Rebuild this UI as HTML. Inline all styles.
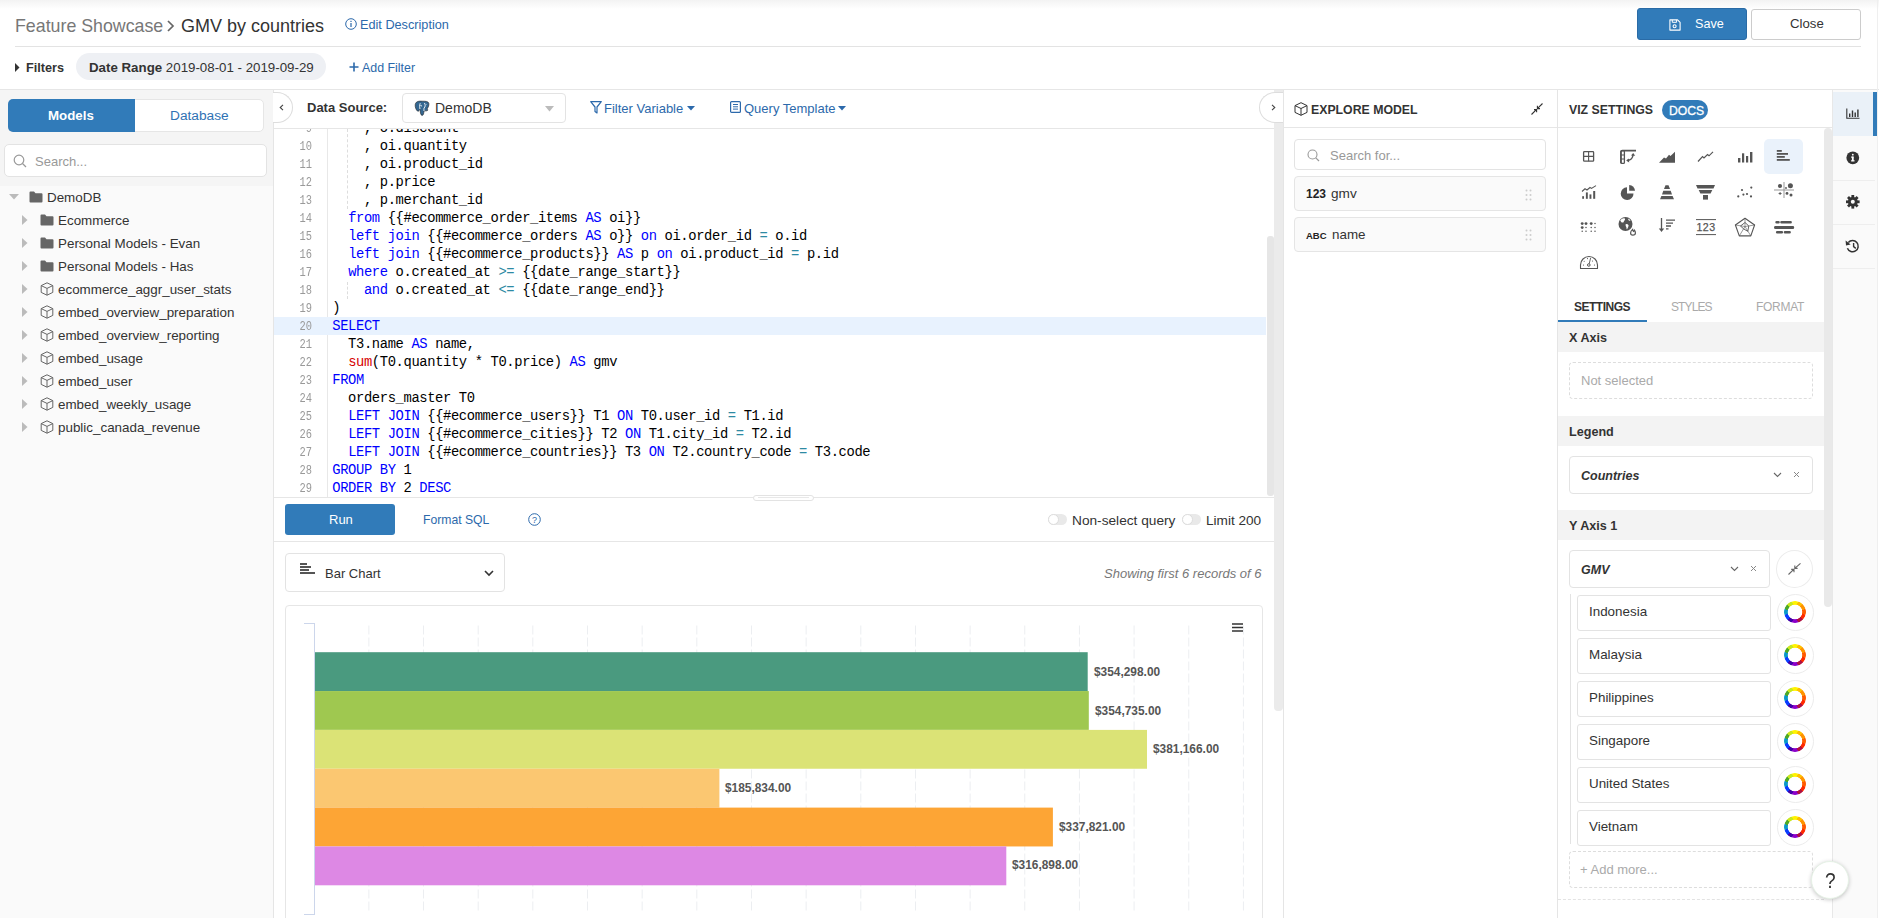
<!DOCTYPE html>
<html><head><meta charset="utf-8">
<style>
*{box-sizing:border-box;margin:0;padding:0}
html,body{width:1879px;height:918px;overflow:hidden;background:#fff;font-family:"Liberation Sans",sans-serif;font-size:13px;color:#333}
.a{position:absolute}
.t{position:absolute;white-space:nowrap;line-height:16px;margin-top:1px}
.b{font-weight:bold}
.mono{font-family:"Liberation Mono",monospace}
svg{position:absolute;overflow:visible}
/* code */
.code{position:absolute;left:333px;top:119px;font-family:"Liberation Mono",monospace;font-size:13.8px;letter-spacing:-0.37px;line-height:18px;color:#000;white-space:pre}
.k{color:#0000ff}.f{color:#d60000}.o{color:#2e8aa3}
.ln{position:absolute;left:280px;width:32px;top:119px;text-align:right;font-family:"Liberation Mono",monospace;font-size:13px;line-height:18px;color:#999;transform:scaleX(0.8);transform-origin:100% 0}
.tree .t{color:#333}
.field{position:absolute;left:1577px;width:194px;height:36px;border:1px solid #e3e3e3;border-radius:3px;background:#fff}
.field span{position:absolute;left:11px;top:9px;font-size:13px;color:#333}
.cw{position:absolute;left:1777px;width:37px;height:37px;border:1px solid #ececec;border-radius:50%;background:#fff}
</style></head><body>

<!-- ===== HEADER ===== -->
<div class="a" style="left:0;top:0;width:1879px;height:9px;background:linear-gradient(#f3f3f3,#fff)"></div>
<div class="t" style="left:15px;top:14.5px;font-size:17.8px;line-height:20px;color:#777">Feature Showcase</div>
<svg style="left:166px;top:20px" width="10" height="12" viewBox="0 0 10 12"><path d="M2 1 L7 6 L2 11" fill="none" stroke="#666" stroke-width="1.7"/></svg>
<div class="t" style="left:181px;top:14.5px;font-size:18px;line-height:20px;color:#333">GMV by countries</div>
<svg style="left:345px;top:18px" width="12" height="12" viewBox="0 0 12 12"><circle cx="6" cy="6" r="5.3" fill="none" stroke="#2c69ab" stroke-width="1"/><rect x="5.4" y="5" width="1.2" height="4" fill="#2c69ab"/><rect x="5.4" y="2.8" width="1.2" height="1.2" fill="#2c69ab"/></svg>
<div class="t" style="left:360px;top:16px;font-size:12.7px;color:#2c69ab">Edit Description</div>

<div class="a" style="left:1637px;top:8px;width:110px;height:32px;background:#317bb9;border:1px solid #2a6ba6;border-radius:3px"></div>
<svg style="left:1669px;top:19px" width="12" height="12" viewBox="0 0 12 12"><path d="M0.9 0.9 H8.6 L11.1 3.4 V11.1 H0.9 Z" fill="none" stroke="#fff" stroke-width="1.1" stroke-linejoin="round"/><path d="M3.3 0.9 V3.3 H7.6 V0.9" fill="none" stroke="#fff" stroke-width="1"/><circle cx="5.6" cy="7.2" r="1.5" fill="none" stroke="#fff" stroke-width="1.1"/></svg>
<div class="t" style="left:1695px;top:15px;color:#fff;font-size:12.6px">Save</div>
<div class="a" style="left:1751px;top:9px;width:110px;height:31px;border:1px solid #ccc;border-radius:3px;background:#fff"></div>
<div class="t" style="left:1790px;top:15px;color:#333;font-size:13.2px">Close</div>

<div class="a" style="left:15px;top:46px;width:1846px;height:1px;background:#e3e3e3"></div>


<!-- filters row -->
<svg style="left:15px;top:63px" width="5" height="9" viewBox="0 0 5 9"><path d="M0 0 L4.5 4.5 L0 9 Z" fill="#333"/></svg>
<div class="t b" style="left:26px;top:59px;font-size:12.7px;color:#333">Filters</div>
<div class="a" style="left:76px;top:53px;width:250px;height:27px;background:#eef0f4;border-radius:14px"></div>
<div class="t" style="left:89px;top:59px;font-size:13.3px;color:#333"><b>Date Range</b> 2019-08-01 - 2019-09-29</div>
<svg style="left:349px;top:62px" width="10" height="10" viewBox="0 0 10 10"><path d="M5 0.5 V9.5 M0.5 5 H9.5" stroke="#2c69ab" stroke-width="1.6"/></svg>
<div class="t" style="left:362px;top:59px;font-size:12.4px;color:#2c69ab">Add Filter</div>

<div class="a" style="left:0;top:89px;width:1879px;height:1px;background:#e6e6e6"></div>

<!-- ===== LEFT PANEL ===== -->
<div class="a" style="left:0;top:90px;width:273px;height:828px;background:#fafafa"></div>
<div class="a" style="left:0;top:90px;width:273px;height:96px;background:#f5f5f5"></div>
<div class="a" style="left:8px;top:99px;width:256px;height:33px;border:1px solid #e6e6e6;border-radius:5px;background:#fff"></div>
<div class="a" style="left:8px;top:99px;width:127px;height:33px;background:#317bb9;border-radius:5px 0 0 5px"></div>
<div class="t b" style="left:48px;top:107px;color:#fff;font-size:13.3px">Models</div>
<div class="t" style="left:170px;top:107px;color:#2f72b4;font-size:13.7px">Database</div>
<div class="a" style="left:4px;top:144px;width:263px;height:33px;border:1px solid #e3e3e3;border-radius:5px;background:#fff"></div>
<svg style="left:13px;top:154px" width="14" height="14" viewBox="0 0 14 14"><circle cx="6" cy="6" r="4.8" fill="none" stroke="#999" stroke-width="1.2"/><path d="M9.5 9.5 L13 13" stroke="#999" stroke-width="1.3"/></svg>
<div class="t" style="left:35px;top:153px;color:#999;font-size:13px">Search...</div>

<div class="tree">
<svg style="left:9px;top:194px" width="10" height="6" viewBox="0 0 10 6"><path d="M0 0 H10 L5 5.5 Z" fill="#bbb"/></svg>
<svg style="left:29px;top:191px" width="14" height="12" viewBox="0 0 14 12"><path d="M0.5 1.5 Q0.5 0.5 1.5 0.5 H5 L6.5 2.2 H12.5 Q13.5 2.2 13.5 3.2 V10.5 Q13.5 11.5 12.5 11.5 H1.5 Q0.5 11.5 0.5 10.5 Z" fill="#666"/></svg>
<div class="t" style="left:47px;top:189px;font-size:13.4px">DemoDB</div>
</div>
<svg style="left:22px;top:215px" width="6" height="10" viewBox="0 0 6 10"><path d="M0 0 L5.5 5 L0 10 Z" fill="#bbb"/></svg>
<svg style="left:40px;top:214px" width="14" height="12" viewBox="0 0 14 12"><path d="M0.5 1.5 Q0.5 0.5 1.5 0.5 H5 L6.5 2.2 H12.5 Q13.5 2.2 13.5 3.2 V10.5 Q13.5 11.5 12.5 11.5 H1.5 Q0.5 11.5 0.5 10.5 Z" fill="#666"/></svg>
<div class="t" style="left:58px;top:212px;font-size:13.4px;color:#333">Ecommerce</div>
<svg style="left:22px;top:238px" width="6" height="10" viewBox="0 0 6 10"><path d="M0 0 L5.5 5 L0 10 Z" fill="#bbb"/></svg>
<svg style="left:40px;top:237px" width="14" height="12" viewBox="0 0 14 12"><path d="M0.5 1.5 Q0.5 0.5 1.5 0.5 H5 L6.5 2.2 H12.5 Q13.5 2.2 13.5 3.2 V10.5 Q13.5 11.5 12.5 11.5 H1.5 Q0.5 11.5 0.5 10.5 Z" fill="#666"/></svg>
<div class="t" style="left:58px;top:235px;font-size:13.4px;color:#333">Personal Models - Evan</div>
<svg style="left:22px;top:261px" width="6" height="10" viewBox="0 0 6 10"><path d="M0 0 L5.5 5 L0 10 Z" fill="#bbb"/></svg>
<svg style="left:40px;top:260px" width="14" height="12" viewBox="0 0 14 12"><path d="M0.5 1.5 Q0.5 0.5 1.5 0.5 H5 L6.5 2.2 H12.5 Q13.5 2.2 13.5 3.2 V10.5 Q13.5 11.5 12.5 11.5 H1.5 Q0.5 11.5 0.5 10.5 Z" fill="#666"/></svg>
<div class="t" style="left:58px;top:258px;font-size:13.4px;color:#333">Personal Models - Has</div>
<svg style="left:22px;top:284px" width="6" height="10" viewBox="0 0 6 10"><path d="M0 0 L5.5 5 L0 10 Z" fill="#bbb"/></svg>
<svg style="left:40px;top:282px" width="14" height="14" viewBox="0 0 14 14"><path d="M7 0.8 L12.8 3.6 V10.4 L7 13.2 L1.2 10.4 V3.6 Z M1.2 3.6 L7 6.4 L12.8 3.6 M7 6.4 V13.2" fill="none" stroke="#666" stroke-width="1" stroke-linejoin="round"/></svg>
<div class="t" style="left:58px;top:281px;font-size:13.4px;color:#333">ecommerce_aggr_user_stats</div>
<svg style="left:22px;top:307px" width="6" height="10" viewBox="0 0 6 10"><path d="M0 0 L5.5 5 L0 10 Z" fill="#bbb"/></svg>
<svg style="left:40px;top:305px" width="14" height="14" viewBox="0 0 14 14"><path d="M7 0.8 L12.8 3.6 V10.4 L7 13.2 L1.2 10.4 V3.6 Z M1.2 3.6 L7 6.4 L12.8 3.6 M7 6.4 V13.2" fill="none" stroke="#666" stroke-width="1" stroke-linejoin="round"/></svg>
<div class="t" style="left:58px;top:304px;font-size:13.4px;color:#333">embed_overview_preparation</div>
<svg style="left:22px;top:330px" width="6" height="10" viewBox="0 0 6 10"><path d="M0 0 L5.5 5 L0 10 Z" fill="#bbb"/></svg>
<svg style="left:40px;top:328px" width="14" height="14" viewBox="0 0 14 14"><path d="M7 0.8 L12.8 3.6 V10.4 L7 13.2 L1.2 10.4 V3.6 Z M1.2 3.6 L7 6.4 L12.8 3.6 M7 6.4 V13.2" fill="none" stroke="#666" stroke-width="1" stroke-linejoin="round"/></svg>
<div class="t" style="left:58px;top:327px;font-size:13.4px;color:#333">embed_overview_reporting</div>
<svg style="left:22px;top:353px" width="6" height="10" viewBox="0 0 6 10"><path d="M0 0 L5.5 5 L0 10 Z" fill="#bbb"/></svg>
<svg style="left:40px;top:351px" width="14" height="14" viewBox="0 0 14 14"><path d="M7 0.8 L12.8 3.6 V10.4 L7 13.2 L1.2 10.4 V3.6 Z M1.2 3.6 L7 6.4 L12.8 3.6 M7 6.4 V13.2" fill="none" stroke="#666" stroke-width="1" stroke-linejoin="round"/></svg>
<div class="t" style="left:58px;top:350px;font-size:13.4px;color:#333">embed_usage</div>
<svg style="left:22px;top:376px" width="6" height="10" viewBox="0 0 6 10"><path d="M0 0 L5.5 5 L0 10 Z" fill="#bbb"/></svg>
<svg style="left:40px;top:374px" width="14" height="14" viewBox="0 0 14 14"><path d="M7 0.8 L12.8 3.6 V10.4 L7 13.2 L1.2 10.4 V3.6 Z M1.2 3.6 L7 6.4 L12.8 3.6 M7 6.4 V13.2" fill="none" stroke="#666" stroke-width="1" stroke-linejoin="round"/></svg>
<div class="t" style="left:58px;top:373px;font-size:13.4px;color:#333">embed_user</div>
<svg style="left:22px;top:399px" width="6" height="10" viewBox="0 0 6 10"><path d="M0 0 L5.5 5 L0 10 Z" fill="#bbb"/></svg>
<svg style="left:40px;top:397px" width="14" height="14" viewBox="0 0 14 14"><path d="M7 0.8 L12.8 3.6 V10.4 L7 13.2 L1.2 10.4 V3.6 Z M1.2 3.6 L7 6.4 L12.8 3.6 M7 6.4 V13.2" fill="none" stroke="#666" stroke-width="1" stroke-linejoin="round"/></svg>
<div class="t" style="left:58px;top:396px;font-size:13.4px;color:#333">embed_weekly_usage</div>
<svg style="left:22px;top:422px" width="6" height="10" viewBox="0 0 6 10"><path d="M0 0 L5.5 5 L0 10 Z" fill="#bbb"/></svg>
<svg style="left:40px;top:420px" width="14" height="14" viewBox="0 0 14 14"><path d="M7 0.8 L12.8 3.6 V10.4 L7 13.2 L1.2 10.4 V3.6 Z M1.2 3.6 L7 6.4 L12.8 3.6 M7 6.4 V13.2" fill="none" stroke="#666" stroke-width="1" stroke-linejoin="round"/></svg>
<div class="t" style="left:58px;top:419px;font-size:13.4px;color:#333">public_canada_revenue</div>

<!-- ===== EDITOR ===== -->
<div class="a" style="left:273px;top:90px;width:1px;height:828px;background:#e5e5e5"></div>
<!-- toolbar -->
<div class="a" style="left:274px;top:128px;width:1000px;height:1px;background:#e6e6e6"></div>
<div class="a" style="left:273px;top:92px;width:20px;height:31px;border:1px solid #ddd;border-left:none;border-radius:0 16px 16px 0/0 15.5px 15.5px 0;background:#fff"></div>
<svg style="left:278.5px;top:103.5px" width="5" height="7" viewBox="0 0 5 7"><path d="M4 0.8 L1.2 3.5 L4 6.2" fill="none" stroke="#444" stroke-width="1.1"/></svg>
<div class="t b" style="left:307px;top:99px;font-size:13px;color:#333">Data Source:</div>
<div class="a" style="left:402px;top:93px;width:164px;height:30px;border:1px solid #e3e3e3;border-radius:4px;background:#fff"></div>
<svg style="left:414px;top:100px" width="17" height="17" viewBox="0 0 17 17"><path d="M8 1.2 C4.5 0.8 1.4 1.8 1.2 4.8 C1 7.4 2.2 10 3.4 11 C4.2 11.6 5 11 5.4 10 L6 9.2 C6.2 11.4 6.4 15.2 8 15.4 C9.6 15.6 9.8 13 10 11 C11.4 10.6 12.8 11.2 13.6 10.4 C14.2 9.8 13.4 9.2 13 9 C14.4 7.2 15.2 5 14.8 3.2 C14.2 1.2 11.4 1.2 8 1.2 Z" fill="#336791" stroke="#222" stroke-width="0.6"/><path d="M6.2 3.2 C5.4 5 5.6 7.6 6 9.2 M6.4 5.6 C7 5 7.8 5.4 7.6 6.4 M10.4 3 C11.4 4.4 11.6 6.6 10 8.2 C9.8 9 10 10.2 10 11 M12 4.2 L12.4 4.4" fill="none" stroke="#fff" stroke-width="0.9"/></svg>
<div class="t" style="left:435px;top:99px;font-size:14px;color:#333">DemoDB</div>
<svg style="left:545px;top:106px" width="9" height="6" viewBox="0 0 9 6"><path d="M0 0 H9 L4.5 5.5 Z" fill="#bbb"/></svg>
<svg style="left:590px;top:101px" width="12" height="13" viewBox="0 0 12 13"><path d="M0.7 0.7 H11.3 L7 6 V12 L5 10.5 V6 Z" fill="none" stroke="#2c69ab" stroke-width="1.2" stroke-linejoin="round"/></svg>
<div class="t" style="left:604px;top:100px;font-size:13px;color:#2c69ab">Filter Variable</div>
<svg style="left:687px;top:106px" width="8" height="5" viewBox="0 0 8 5"><path d="M0 0 H8 L4 4.5 Z" fill="#2c69ab"/></svg>
<svg style="left:730px;top:101px" width="11" height="12" viewBox="0 0 11 12"><rect x="0.6" y="0.6" width="9.8" height="10.8" rx="1" fill="none" stroke="#2c69ab" stroke-width="1.2"/><path d="M3 3.5 H8 M3 5.8 H8 M3 8.1 H8" stroke="#2c69ab" stroke-width="1"/></svg>
<div class="t" style="left:744px;top:100px;font-size:13px;color:#2c69ab">Query Template</div>
<svg style="left:838px;top:106px" width="8" height="5" viewBox="0 0 8 5"><path d="M0 0 H8 L4 4.5 Z" fill="#2c69ab"/></svg>


<!-- code area -->
<div class="a" style="left:274px;top:129px;width:993px;height:368px;overflow:hidden" id="codebox">
</div>
<div class="a" style="left:274px;top:129px;width:54px;height:368px;background:#fff"></div>
<div class="a" style="left:327px;top:129px;width:1px;height:368px;background:#e8e8e8"></div>
<div class="a" style="left:274px;top:317px;width:992px;height:18px;background:#e8f2fe"></div>
<div class="a" style="left:274px;top:129px;width:993px;height:368px;overflow:hidden">
<div class="ln" style="left:6px;top:-9px">9<br>10<br>11<br>12<br>13<br>14<br>15<br>16<br>17<br>18<br>19<br>20<br>21<br>22<br>23<br>24<br>25<br>26<br>27<br>28<br>29</div>
<div class="a" style="left:73px;top:0;width:0;height:80px;border-left:1px dashed #ddd"></div>
<div class="a" style="left:73px;top:153px;width:0;height:17px;border-left:1px dashed #ddd"></div>
<div class="code" style="left:58.3px;top:-9px">    , o.discount
    , oi.quantity
    , oi.product_id
    , p.price
    , p.merchant_id
  <span class="k">from</span> {{#ecommerce_order_items <span class="k">AS</span> oi}}
  <span class="k">left join</span> {{#ecommerce_orders <span class="k">AS</span> o}} <span class="k">on</span> oi.order_id <span class="o">=</span> o.id
  <span class="k">left join</span> {{#ecommerce_products}} <span class="k">AS</span> p <span class="k">on</span> oi.product_id <span class="o">=</span> p.id
  <span class="k">where</span> o.created_at <span class="o">&gt;=</span> {{date_range_start}}
    <span class="k">and</span> o.created_at <span class="o">&lt;=</span> {{date_range_end}}
)
<span class="k">SELECT</span>
  T3.name <span class="k">AS</span> name,
  <span class="f">sum</span>(T0.quantity * T0.price) <span class="k">AS</span> gmv
<span class="k">FROM</span>
  orders_master T0
  <span class="k">LEFT JOIN</span> {{#ecommerce_users}} T1 <span class="k">ON</span> T0.user_id <span class="o">=</span> T1.id
  <span class="k">LEFT JOIN</span> {{#ecommerce_cities}} T2 <span class="k">ON</span> T1.city_id <span class="o">=</span> T2.id
  <span class="k">LEFT JOIN</span> {{#ecommerce_countries}} T3 <span class="k">ON</span> T2.country_code <span class="o">=</span> T3.code
<span class="k">GROUP BY</span> 1
<span class="k">ORDER BY</span> 2 <span class="k">DESC</span></div>
</div>
<div class="a" style="left:1267px;top:236px;width:7px;height:260px;background:#e6e6e6;border-radius:3px"></div>
<div class="a" style="left:1274px;top:90px;width:9px;height:621px;background:#ebebeb;border-radius:0 0 4px 4px"></div>
<div class="a" style="left:1259px;top:92px;width:24px;height:31px;border:1px solid #ddd;border-right:none;border-radius:16px 0 0 16px/15.5px 0 0 15.5px;background:#fff"></div>
<svg style="left:1270.5px;top:103.8px" width="5" height="7" viewBox="0 0 5 7"><path d="M1 0.8 L3.8 3.5 L1 6.2" fill="none" stroke="#444" stroke-width="1.1"/></svg>

<!-- run bar -->
<div class="a" style="left:274px;top:497px;width:1000px;height:1px;background:#e6e6e6"></div>
<div class="a" style="left:753px;top:495px;width:61px;height:6px;border:1px solid #e3e3e3;border-radius:3px;background:#fff"></div><div class="a" style="left:758px;top:497px;width:51px;height:1px;background:#e8e8e8"></div>
<div class="a" style="left:285px;top:504px;width:110px;height:31px;background:#317bb9;border-radius:3px"></div>
<div class="t" style="left:329px;top:511px;color:#fff;font-size:13px">Run</div>
<div class="t" style="left:423px;top:511px;color:#2c69ab;font-size:12.2px">Format SQL</div>
<svg style="left:528px;top:513px" width="13" height="13" viewBox="0 0 13 13"><circle cx="6.5" cy="6.5" r="5.8" fill="none" stroke="#2c69ab" stroke-width="1"/><text x="6.5" y="9.8" font-size="9" text-anchor="middle" fill="#2c69ab" font-family="Liberation Sans">?</text></svg>
<div class="a" style="left:1048px;top:514px;width:19px;height:11px;border-radius:6px;background:#e9e9e9"></div>
<div class="a" style="left:1048px;top:514px;width:11px;height:11px;border-radius:50%;background:#fff;border:1px solid #ddd"></div>
<div class="t" style="left:1072px;top:512px;font-size:13.7px;color:#333">Non-select query</div>
<div class="a" style="left:1182px;top:514px;width:19px;height:11px;border-radius:6px;background:#e9e9e9"></div>
<div class="a" style="left:1182px;top:514px;width:11px;height:11px;border-radius:50%;background:#fff;border:1px solid #ddd"></div>
<div class="t" style="left:1206px;top:512px;font-size:13.6px;color:#333">Limit 200</div>
<div class="a" style="left:274px;top:541px;width:1000px;height:1px;background:#e6e6e6"></div>

<!-- chart type select -->
<div class="a" style="left:285px;top:553px;width:220px;height:39px;border:1px solid #e3e3e3;border-radius:4px;background:#fff"></div>
<svg style="left:300px;top:563px" width="15" height="12" viewBox="0 0 15 12"><rect x="0" y="0" width="7" height="2" fill="#555"/><rect x="0" y="3" width="11" height="2" fill="#555"/><rect x="0" y="6" width="9" height="2" fill="#555"/><rect x="0" y="9" width="15" height="2" fill="#555"/></svg>
<div class="t" style="left:325px;top:565px;font-size:13px;color:#333">Bar Chart</div>
<svg style="left:484px;top:570px" width="10" height="6" viewBox="0 0 10 6"><path d="M1 1 L5 5 L9 1" fill="none" stroke="#333" stroke-width="1.6"/></svg>
<div class="t" style="left:1104px;top:565px;font-style:italic;font-size:13px;color:#777">Showing first 6 records of 6</div>

<!-- chart card -->
<div class="a" style="left:285px;top:605px;width:978px;height:330px;border:1px solid #e6e6e6;border-radius:4px;background:#fff"></div>
<svg style="left:300px;top:623px" width="960" height="292" viewBox="0 0 960 292"><line x1="68.86" y1="2.5" x2="68.86" y2="288" stroke="#eceef1" stroke-width="1" stroke-dasharray="9 3"/><line x1="123.52" y1="2.5" x2="123.52" y2="288" stroke="#eceef1" stroke-width="1" stroke-dasharray="9 3"/><line x1="178.18" y1="2.5" x2="178.18" y2="288" stroke="#eceef1" stroke-width="1" stroke-dasharray="9 3"/><line x1="232.84" y1="2.5" x2="232.84" y2="288" stroke="#eceef1" stroke-width="1" stroke-dasharray="9 3"/><line x1="287.50" y1="2.5" x2="287.50" y2="288" stroke="#eceef1" stroke-width="1" stroke-dasharray="9 3"/><line x1="342.16" y1="2.5" x2="342.16" y2="288" stroke="#eceef1" stroke-width="1" stroke-dasharray="9 3"/><line x1="396.82" y1="2.5" x2="396.82" y2="288" stroke="#eceef1" stroke-width="1" stroke-dasharray="9 3"/><line x1="451.48" y1="2.5" x2="451.48" y2="288" stroke="#eceef1" stroke-width="1" stroke-dasharray="9 3"/><line x1="506.14" y1="2.5" x2="506.14" y2="288" stroke="#eceef1" stroke-width="1" stroke-dasharray="9 3"/><line x1="560.80" y1="2.5" x2="560.80" y2="288" stroke="#eceef1" stroke-width="1" stroke-dasharray="9 3"/><line x1="615.46" y1="2.5" x2="615.46" y2="288" stroke="#eceef1" stroke-width="1" stroke-dasharray="9 3"/><line x1="670.12" y1="2.5" x2="670.12" y2="288" stroke="#eceef1" stroke-width="1" stroke-dasharray="9 3"/><line x1="724.78" y1="2.5" x2="724.78" y2="288" stroke="#eceef1" stroke-width="1" stroke-dasharray="9 3"/><line x1="779.44" y1="2.5" x2="779.44" y2="288" stroke="#eceef1" stroke-width="1" stroke-dasharray="9 3"/><line x1="834.10" y1="2.5" x2="834.10" y2="288" stroke="#eceef1" stroke-width="1" stroke-dasharray="9 3"/><line x1="888.76" y1="2.5" x2="888.76" y2="288" stroke="#eceef1" stroke-width="1" stroke-dasharray="9 3"/><line x1="943.42" y1="2.5" x2="943.42" y2="288" stroke="#eceef1" stroke-width="1" stroke-dasharray="9 3"/></svg>
<svg style="left:315px;top:650px" width="900" height="240" viewBox="0 0 900 240" shape-rendering="geometricPrecision"><rect x="0" y="2.20" width="772.70" height="38.85" fill="#4a9a7f"/><rect x="0" y="41.05" width="773.80" height="38.85" fill="#9fc850"/><rect x="0" y="79.90" width="832.00" height="38.85" fill="#dbe376"/><rect x="0" y="118.75" width="404.40" height="38.85" fill="#fbc771"/><rect x="0" y="157.60" width="737.90" height="38.85" fill="#fda535"/><rect x="0" y="196.45" width="691.30" height="38.85" fill="#dd88e4"/></svg>
<div class="t b" style="left:1094.0px;top:662.5px;font-size:11.9px;color:#555;font-family:'Liberation Sans'">$354,298.00</div>
<div class="t b" style="left:1095.0px;top:701.5px;font-size:11.9px;color:#555;font-family:'Liberation Sans'">$354,735.00</div>
<div class="t b" style="left:1153.0px;top:740.0px;font-size:11.9px;color:#555;font-family:'Liberation Sans'">$381,166.00</div>
<div class="t b" style="left:725.0px;top:779.0px;font-size:11.9px;color:#555;font-family:'Liberation Sans'">$185,834.00</div>
<div class="t b" style="left:1059.0px;top:817.5px;font-size:11.9px;color:#555;font-family:'Liberation Sans'">$337,821.00</div>
<div class="t b" style="left:1012.0px;top:856.0px;font-size:11.9px;color:#555;font-family:'Liberation Sans'">$316,898.00</div>
<div class="a" style="left:304px;top:623px;width:11px;height:292px;border:1px solid #ccd6eb;border-left:none"></div>
<svg style="left:1232px;top:623px" width="11" height="9" viewBox="0 0 11 9"><path d="M0 1 H11 M0 4.5 H11 M0 8 H11" stroke="#333" stroke-width="1.3"/></svg>

<!-- ===== EXPLORE MODEL ===== -->
<div class="a" style="left:1283px;top:90px;width:1px;height:828px;background:#e5e5e5"></div>
<div class="a" style="left:1284px;top:127px;width:273px;height:1px;background:#e6e6e6"></div>
<svg style="left:1294px;top:102px" width="14" height="14" viewBox="0 0 14 14"><path d="M7 0.7 L13 3.6 V10.4 L7 13.3 L1 10.4 V3.6 Z M1 3.6 L7 6.5 L13 3.6 M7 6.5 V13.3" fill="none" stroke="#333" stroke-width="1" stroke-linejoin="round"/></svg>
<div class="t b" style="left:1311px;top:101px;font-size:12.3px;color:#333">EXPLORE MODEL</div>
<svg style="left:1531px;top:103px" width="12" height="12" viewBox="0 0 12 12"><path d="M0.5 11.5 L5.6 6.4 M6.4 5.6 L11.5 0.5 M3 6.6 H5.6 V9.2 M6.4 2.8 V5.6 H9" fill="none" stroke="#333" stroke-width="1.1"/></svg>
<div class="a" style="left:1294px;top:139px;width:252px;height:31px;border:1px solid #e3e3e3;border-radius:4px;background:#fff"></div>
<svg style="left:1307px;top:149px" width="13" height="13" viewBox="0 0 13 13"><circle cx="5.5" cy="5.5" r="4.5" fill="none" stroke="#999" stroke-width="1.1"/><path d="M8.8 8.8 L12 12" stroke="#999" stroke-width="1.2"/></svg>
<div class="t" style="left:1330px;top:147px;font-size:13px;color:#999">Search for...</div>
<div class="a" style="left:1294px;top:176px;width:252px;height:35px;border:1px solid #e5e5e5;border-radius:4px;background:#fafafa"></div>
<div class="t b" style="left:1306px;top:185px;font-size:12px;color:#222">123</div>
<div class="t" style="left:1331px;top:185px;font-size:13.6px;color:#333">gmv</div>
<div class="a" style="left:1294px;top:217px;width:252px;height:35px;border:1px solid #e5e5e5;border-radius:4px;background:#fafafa"></div>
<div class="t b" style="left:1306px;top:226.5px;font-size:9.5px;color:#222">ABC</div>
<div class="t" style="left:1332px;top:226px;font-size:13.4px;color:#333">name</div>
<svg style="left:1525px;top:189px" width="8" height="12" viewBox="0 0 8 12"><g fill="#ccc"><circle cx="1.5" cy="1.5" r="1"/><circle cx="5.5" cy="1.5" r="1"/><circle cx="1.5" cy="6" r="1"/><circle cx="5.5" cy="6" r="1"/><circle cx="1.5" cy="10.5" r="1"/><circle cx="5.5" cy="10.5" r="1"/></g></svg>
<svg style="left:1525px;top:229px" width="8" height="12" viewBox="0 0 8 12"><g fill="#ccc"><circle cx="1.5" cy="1.5" r="1"/><circle cx="5.5" cy="1.5" r="1"/><circle cx="1.5" cy="6" r="1"/><circle cx="5.5" cy="6" r="1"/><circle cx="1.5" cy="10.5" r="1"/><circle cx="5.5" cy="10.5" r="1"/></g></svg>

<!-- ===== VIZ SETTINGS ===== -->
<div class="a" style="left:1557px;top:90px;width:1px;height:828px;background:#e5e5e5"></div>
<div class="a" style="left:1558px;top:127px;width:274px;height:1px;background:#e6e6e6"></div>
<div class="t b" style="left:1569px;top:101px;font-size:12.3px;color:#333">VIZ SETTINGS</div>
<div class="a" style="left:1662px;top:100px;width:46px;height:20px;border-radius:10px;background:#317bb9"></div>
<div class="t" style="left:1669px;top:102px;font-size:12.2px;color:#fff;-webkit-text-stroke:0.3px #fff">DOCS</div>
<div class="a" style="left:1764px;top:139px;width:39px;height:35px;border-radius:5px;background:#eaf2fb"></div>
<svg style="left:1582px;top:150px" width="13" height="13" viewBox="0 0 13 13"><rect x="1.6" y="1.6" width="10" height="9.6" rx="0.8" fill="none" stroke="#555" stroke-width="1.3"/><path d="M6.6 1.6 V11.2 M1.6 6.4 H11.6" stroke="#555" stroke-width="1.1"/></svg>
<svg style="left:1619px;top:149px" width="18" height="16" viewBox="0 0 18 16"><path d="M2 14 V3 Q2 1.6 3.4 1.6 H17" fill="none" stroke="#555" stroke-width="1.6"/><rect x="1.8" y="1.6" width="3.6" height="12.8" rx="1" fill="none" stroke="#555" stroke-width="1.3"/><path d="M2 6 H5.4 M2 10 H5.4" stroke="#555" stroke-width="1.1"/><path d="M8.5 11.5 Q13.5 11 14 6" fill="none" stroke="#555" stroke-width="1.5"/><path d="M12 6.5 L14.2 4 L16.2 6.8 Z M9.8 9.4 L7.2 11.6 L10.2 13.6 Z" fill="#555"/></svg>
<svg style="left:1658px;top:151px" width="18" height="13" viewBox="0 0 18 13"><path d="M1 11.8 L6 6.5 L8 7.5 L11 3.8 L12.5 5 L17 0.8 V11.8 Z" fill="#555"/></svg>
<svg style="left:1697px;top:151px" width="17" height="12" viewBox="0 0 17 12"><path d="M1 10.5 L5.5 5.5 L7 7 L10.5 3.5 L12 4.8 L16 0.8" fill="none" stroke="#555" stroke-width="1.2"/></svg>
<svg style="left:1737px;top:151px" width="16" height="12" viewBox="0 0 16 12"><rect x="1" y="7" width="2.4" height="4.5" fill="#555"/><rect x="5" y="2.3" width="2.2" height="9.2" fill="#555"/><rect x="9" y="5" width="2.2" height="6.5" fill="#555"/><rect x="13" y="1" width="2.4" height="10.5" fill="#555"/></svg>
<svg style="left:1776px;top:149px" width="15" height="13" viewBox="0 0 15 13"><rect x="0.8" y="1" width="5" height="1.8" fill="#555"/><rect x="0.8" y="4" width="11.2" height="1.8" fill="#555"/><rect x="0.8" y="7" width="8" height="1.8" fill="#555"/><rect x="0.8" y="10" width="13" height="1.8" fill="#555"/></svg>
<svg style="left:1581px;top:185px" width="16" height="15" viewBox="0 0 16 15"><path d="M1 6.5 L4 3.8 L6 5 L9 2.5 L10.5 3.4 L15 0.6" fill="none" stroke="#555" stroke-width="1.1"/><rect x="1.2" y="11.2" width="1.8" height="2.6" fill="#555"/><rect x="4.9" y="7.4" width="1.9" height="6.4" fill="#555"/><rect x="8.5" y="9.4" width="1.9" height="4.4" fill="#555"/><rect x="12.2" y="6" width="2" height="7.8" fill="#555"/></svg>
<svg style="left:1620px;top:184px" width="16" height="16" viewBox="0 0 16 16"><path d="M7 3.3 A6.4 6.4 0 1 0 13.5 9.5 H7 Z" fill="#555"/><path d="M9.2 1 A5.8 5.8 0 0 1 15 6.8 L9.2 6.8 Z" fill="#555"/></svg>
<svg style="left:1659px;top:184px" width="16" height="16" viewBox="0 0 16 16"><path d="M6.5 1.2 H9.5 L11 5 H5 Z" fill="#555"/><path d="M4.3 6.8 H11.7 L13 10.4 H3 Z" fill="#555"/><path d="M2.4 12 H13.6 L15 15.3 H1 Z" fill="#555"/></svg>
<svg style="left:1695px;top:184px" width="21" height="16" viewBox="0 0 21 16"><path d="M1 1 H20 L18.5 4.6 H2.5 Z" fill="#555"/><path d="M3.7 6 H17.3 L15.6 9.6 H5.4 Z" fill="#555"/><rect x="8" y="11" width="5" height="4.6" fill="#555"/></svg>
<svg style="left:1736px;top:185px" width="18" height="14" viewBox="0 0 18 14"><circle cx="2.2999999999999545" cy="11.400000000000006" r="1.1" fill="#555"/><circle cx="6" cy="5" r="1.1" fill="#555"/><circle cx="7.400000000000091" cy="9.599999999999994" r="1.1" fill="#555"/><circle cx="11" cy="9" r="1.1" fill="#555"/><circle cx="15" cy="11.400000000000006" r="1.1" fill="#555"/><circle cx="15.299999999999955" cy="2.5999999999999943" r="1.1" fill="#555"/></svg>
<svg style="left:1773px;top:181px" width="22" height="18" viewBox="0 0 22 18"><path d="M11 1 V17 M1 9 H21" stroke="#999" stroke-width="1"/><circle cx="7" cy="5" r="2.1" fill="#555"/><circle cx="17.40000000000009" cy="4.699999999999989" r="2.5" fill="#555"/><circle cx="13" cy="7" r="0.9" fill="#555"/><circle cx="14" cy="12.400000000000006" r="1.4" fill="#555"/><circle cx="18" cy="14" r="1.5" fill="#555"/><path d="M5.6 12.5 H8.6 M7.1 11 V14" stroke="#555" stroke-width="0.9"/></svg>
<svg style="left:1580px;top:221px" width="17" height="12" viewBox="0 0 17 12"><circle cx="2.2" cy="2.6" r="1.45" fill="#555"/><circle cx="6.0" cy="2.6" r="1.45" fill="#555"/><circle cx="11.2" cy="2.6" r="1.45" fill="#555"/><circle cx="15.0" cy="2.6" r="0.75" fill="#555"/><circle cx="2.2" cy="6.6" r="1.45" fill="#555"/><circle cx="6.0" cy="6.6" r="0.75" fill="#555"/><circle cx="11.2" cy="6.6" r="0.75" fill="#555"/><circle cx="15.0" cy="6.6" r="0.75" fill="#555"/><circle cx="2.2" cy="10.2" r="0.75" fill="#555"/><circle cx="6.0" cy="10.2" r="0.75" fill="#555"/><circle cx="11.2" cy="10.2" r="0.75" fill="#555"/><circle cx="15.0" cy="10.2" r="0.75" fill="#555"/></svg>
<svg style="left:1617px;top:216px" width="20" height="20" viewBox="0 0 20 20"><circle cx="8.5" cy="8" r="7" fill="#555"/><path d="M3.2 4.2 Q5 1.8 7.6 2.2 Q8.6 3.2 7.6 4.4 Q6.6 4.6 6.8 6 Q5.6 7 4.4 6.2 Q3.6 5.4 3.2 4.2 Z M8.6 8.2 Q10.6 7.8 11.6 9.2 Q11.4 11.4 10 13.6 Q9.2 12.6 9.4 11.2 Q8.4 10 8.6 8.2 Z M10.8 2.6 Q12.6 3 13.6 4.6 Q12.6 5 11.8 4.4 Z" fill="#fff"/><path d="M15.8 19.2 Q13.6 19.2 13.6 17 Q13.6 15.2 15.6 13.4 Q15.8 15 16.6 15.4 Q17.2 14.6 17.4 14.2 Q18.4 15.6 18.4 17 Q18.4 19.2 15.8 19.2 Z" fill="none" stroke="#555" stroke-width="1.2"/></svg>
<svg style="left:1658px;top:217px" width="19" height="17" viewBox="0 0 19 17"><path d="M3.5 1 V13" stroke="#555" stroke-width="1.3"/><path d="M0.8 11.5 L3.5 15 L6.2 11.5 Z" fill="#555"/><path d="M8 3.2 H17 M8 6.1 H15 M8 9 H13 M8 11.9 H10.5" stroke="#555" stroke-width="1.3"/></svg>
<svg style="left:1695px;top:218px" width="22" height="18" viewBox="0 0 22 18"><path d="M1 1.6 H21 M1 16.6 H21" stroke="#555" stroke-width="1"/><text x="11" y="13" font-family="Liberation Sans" font-size="10.6" text-anchor="middle" fill="#555" letter-spacing="0.5" stroke="#555" stroke-width="0.25">123</text></svg>
<svg style="left:1733px;top:216px" width="24" height="22" viewBox="0 0 24 22"><polygon points="12.0,2.2 21.6,9.0 17.8,19.9 6.3,19.9 2.4,9.0" fill="none" stroke="#555" stroke-width="1.1" stroke-linejoin="round"/><path d="M12 10.5 L12.0 2.2" stroke="#555" stroke-width="0.6"/><path d="M12 10.5 L21.6 9.0" stroke="#555" stroke-width="0.6"/><path d="M12 10.5 L17.8 19.9" stroke="#555" stroke-width="0.6"/><path d="M12 10.5 L6.3 19.9" stroke="#555" stroke-width="0.6"/><path d="M12 10.5 L2.4 9.0" stroke="#555" stroke-width="0.6"/><polygon points="12.0,6.5 15.8,10.0 14.8,15.3 10.8,13.0 7.5,10.0" fill="none" stroke="#555" stroke-width="0.9"/></svg>
<svg style="left:1773px;top:219px" width="22" height="16" viewBox="0 0 22 16"><path d="M3.6 3.3 H5.5 M8.5 3.3 H17.6 M2.6 8.4 H19.6 M4.2 13.2 H8.8 M12 13.2 H16.6" stroke="#555" stroke-width="2.6" stroke-linecap="round"/><path d="M2.6 8.4 H19.6" stroke="#555" stroke-width="3" stroke-linecap="round"/></svg>
<svg style="left:1579px;top:254px" width="20" height="16" viewBox="0 0 20 16"><path d="M1.5 14.5 V11 A8.5 8.5 0 0 1 18.5 11 V14.5 Z" fill="none" stroke="#555" stroke-width="1.1" stroke-linejoin="round"/><circle cx="9.8" cy="11" r="1.3" fill="none" stroke="#555" stroke-width="1"/><path d="M10.2 9.8 L11.6 4" stroke="#555" stroke-width="0.9"/><circle cx="4.5" cy="11" r="0.55" fill="#555"/><circle cx="5.2" cy="7.2" r="0.55" fill="#555"/><circle cx="8.5" cy="4.6" r="0.55" fill="#555"/><circle cx="13.5" cy="7" r="0.55" fill="#555"/><circle cx="15.5" cy="11" r="0.55" fill="#555"/></svg>
<div class="t b" style="left:1574px;top:298px;font-size:12px;color:#333;letter-spacing:-0.5px">SETTINGS</div>
<div class="t" style="left:1671px;top:298px;font-size:12px;color:#aaa;letter-spacing:-0.9px">STYLES</div>
<div class="t" style="left:1756px;top:298px;font-size:12px;color:#aaa;letter-spacing:-0.3px">FORMAT</div>
<div class="a" style="left:1558px;top:322px;width:266px;height:1px;background:#e6e6e6"></div>
<div class="a" style="left:1558px;top:320px;width:89px;height:2px;background:#317bb9"></div>
<div class="a" style="left:1558px;top:322px;width:266px;height:30px;background:#f3f3f3"></div>
<div class="t b" style="left:1569px;top:329.0px;font-size:12.6px;color:#333">X Axis</div>
<div class="a" style="left:1558px;top:415.5px;width:266px;height:30.5px;background:#f3f3f3"></div>
<div class="t b" style="left:1569px;top:422.75px;font-size:12.6px;color:#333">Legend</div>
<div class="a" style="left:1558px;top:510px;width:266px;height:30px;background:#f3f3f3"></div>
<div class="t b" style="left:1569px;top:517.0px;font-size:12.6px;color:#333">Y Axis 1</div>
<div class="a" style="left:1569px;top:362px;width:244px;height:37px;border:1px dashed #ddd;border-radius:4px"></div>
<div class="t" style="left:1581px;top:372px;font-size:13px;color:#aaa">Not selected</div>
<div class="a" style="left:1569px;top:456px;width:244px;height:38px;border:1px solid #e3e3e3;border-radius:4px;background:#fff"></div>
<div class="t" style="left:1581px;top:467px;font-size:12.5px;font-style:italic;font-weight:bold;color:#333">Countries</div>
<svg style="left:1773px;top:472px" width="9" height="6" viewBox="0 0 9 6"><path d="M1 1 L4.5 4.5 L8 1" fill="none" stroke="#666" stroke-width="1.1"/></svg>
<svg style="left:1793px;top:471px" width="7" height="7" viewBox="0 0 7 7"><path d="M1 1 L6 6 M6 1 L1 6" stroke="#888" stroke-width="1"/></svg>
<div class="a" style="left:1569px;top:550px;width:201px;height:38px;border:1px solid #e3e3e3;border-radius:4px;background:#fff"></div>
<div class="t" style="left:1581px;top:561px;font-size:12.5px;font-style:italic;font-weight:bold;color:#333">GMV</div>
<svg style="left:1730px;top:566px" width="9" height="6" viewBox="0 0 9 6"><path d="M1 1 L4.5 4.5 L8 1" fill="none" stroke="#666" stroke-width="1.1"/></svg>
<svg style="left:1750px;top:565px" width="7" height="7" viewBox="0 0 7 7"><path d="M1 1 L6 6 M6 1 L1 6" stroke="#888" stroke-width="1"/></svg>
<div class="a" style="left:1776px;top:550px;width:37px;height:38px;border:1px solid #ececec;border-radius:50%;background:#fff"></div>
<svg style="left:1787.5px;top:563px" width="13" height="12" viewBox="0 0 13 12"><path d="M0.5 11.5 L6 6.2 M6.8 5.4 L12.5 0.3 M3.2 6.4 H6 V9.2 M6.8 2.6 V5.4 H9.6" fill="none" stroke="#666" stroke-width="1.1"/></svg>
<div class="a" style="left:1570px;top:594px;width:1px;height:250px;background:#e3e3e3"></div>
<div class="a" style="left:1577px;top:594.7px;width:194px;height:36px;border:1px solid #e3e3e3;border-radius:3px;background:#fff"></div>
<div class="t" style="left:1589px;top:603.2px;font-size:13.4px;color:#333">Indonesia</div>
<div class="a" style="left:1777px;top:594.2px;width:37px;height:37px;border:1px solid #ececec;border-radius:50%;background:#fff"></div>
<div class="a" style="left:1784.2px;top:600.9px;width:21.8px;height:21.8px;border-radius:50%;background:conic-gradient(from -15deg,#fff200 0 30deg,#ffbf00 0 60deg,#ff9400 0 90deg,#ff5a00 0 120deg,#ff2a00 0 150deg,#b01040 0 180deg,#8a00c8 0 210deg,#4000a8 0 240deg,#0a3cff 0 270deg,#0a98c8 0 300deg,#4ca828 0 330deg,#c8e81e 0 360deg);-webkit-mask:radial-gradient(circle,transparent 7px,#000 7.6px);mask:radial-gradient(circle,transparent 7px,#000 7.6px)"></div>
<div class="a" style="left:1577px;top:637.7px;width:194px;height:36px;border:1px solid #e3e3e3;border-radius:3px;background:#fff"></div>
<div class="t" style="left:1589px;top:646.2px;font-size:13.4px;color:#333">Malaysia</div>
<div class="a" style="left:1777px;top:637.2px;width:37px;height:37px;border:1px solid #ececec;border-radius:50%;background:#fff"></div>
<div class="a" style="left:1784.2px;top:643.9px;width:21.8px;height:21.8px;border-radius:50%;background:conic-gradient(from -15deg,#fff200 0 30deg,#ffbf00 0 60deg,#ff9400 0 90deg,#ff5a00 0 120deg,#ff2a00 0 150deg,#b01040 0 180deg,#8a00c8 0 210deg,#4000a8 0 240deg,#0a3cff 0 270deg,#0a98c8 0 300deg,#4ca828 0 330deg,#c8e81e 0 360deg);-webkit-mask:radial-gradient(circle,transparent 7px,#000 7.6px);mask:radial-gradient(circle,transparent 7px,#000 7.6px)"></div>
<div class="a" style="left:1577px;top:680.7px;width:194px;height:36px;border:1px solid #e3e3e3;border-radius:3px;background:#fff"></div>
<div class="t" style="left:1589px;top:689.2px;font-size:13.4px;color:#333">Philippines</div>
<div class="a" style="left:1777px;top:680.2px;width:37px;height:37px;border:1px solid #ececec;border-radius:50%;background:#fff"></div>
<div class="a" style="left:1784.2px;top:686.9px;width:21.8px;height:21.8px;border-radius:50%;background:conic-gradient(from -15deg,#fff200 0 30deg,#ffbf00 0 60deg,#ff9400 0 90deg,#ff5a00 0 120deg,#ff2a00 0 150deg,#b01040 0 180deg,#8a00c8 0 210deg,#4000a8 0 240deg,#0a3cff 0 270deg,#0a98c8 0 300deg,#4ca828 0 330deg,#c8e81e 0 360deg);-webkit-mask:radial-gradient(circle,transparent 7px,#000 7.6px);mask:radial-gradient(circle,transparent 7px,#000 7.6px)"></div>
<div class="a" style="left:1577px;top:723.7px;width:194px;height:36px;border:1px solid #e3e3e3;border-radius:3px;background:#fff"></div>
<div class="t" style="left:1589px;top:732.2px;font-size:13.4px;color:#333">Singapore</div>
<div class="a" style="left:1777px;top:723.2px;width:37px;height:37px;border:1px solid #ececec;border-radius:50%;background:#fff"></div>
<div class="a" style="left:1784.2px;top:729.9px;width:21.8px;height:21.8px;border-radius:50%;background:conic-gradient(from -15deg,#fff200 0 30deg,#ffbf00 0 60deg,#ff9400 0 90deg,#ff5a00 0 120deg,#ff2a00 0 150deg,#b01040 0 180deg,#8a00c8 0 210deg,#4000a8 0 240deg,#0a3cff 0 270deg,#0a98c8 0 300deg,#4ca828 0 330deg,#c8e81e 0 360deg);-webkit-mask:radial-gradient(circle,transparent 7px,#000 7.6px);mask:radial-gradient(circle,transparent 7px,#000 7.6px)"></div>
<div class="a" style="left:1577px;top:766.7px;width:194px;height:36px;border:1px solid #e3e3e3;border-radius:3px;background:#fff"></div>
<div class="t" style="left:1589px;top:775.2px;font-size:13.4px;color:#333">United States</div>
<div class="a" style="left:1777px;top:766.2px;width:37px;height:37px;border:1px solid #ececec;border-radius:50%;background:#fff"></div>
<div class="a" style="left:1784.2px;top:772.9px;width:21.8px;height:21.8px;border-radius:50%;background:conic-gradient(from -15deg,#fff200 0 30deg,#ffbf00 0 60deg,#ff9400 0 90deg,#ff5a00 0 120deg,#ff2a00 0 150deg,#b01040 0 180deg,#8a00c8 0 210deg,#4000a8 0 240deg,#0a3cff 0 270deg,#0a98c8 0 300deg,#4ca828 0 330deg,#c8e81e 0 360deg);-webkit-mask:radial-gradient(circle,transparent 7px,#000 7.6px);mask:radial-gradient(circle,transparent 7px,#000 7.6px)"></div>
<div class="a" style="left:1577px;top:809.7px;width:194px;height:36px;border:1px solid #e3e3e3;border-radius:3px;background:#fff"></div>
<div class="t" style="left:1589px;top:818.2px;font-size:13.4px;color:#333">Vietnam</div>
<div class="a" style="left:1777px;top:809.2px;width:37px;height:37px;border:1px solid #ececec;border-radius:50%;background:#fff"></div>
<div class="a" style="left:1784.2px;top:815.9px;width:21.8px;height:21.8px;border-radius:50%;background:conic-gradient(from -15deg,#fff200 0 30deg,#ffbf00 0 60deg,#ff9400 0 90deg,#ff5a00 0 120deg,#ff2a00 0 150deg,#b01040 0 180deg,#8a00c8 0 210deg,#4000a8 0 240deg,#0a3cff 0 270deg,#0a98c8 0 300deg,#4ca828 0 330deg,#c8e81e 0 360deg);-webkit-mask:radial-gradient(circle,transparent 7px,#000 7.6px);mask:radial-gradient(circle,transparent 7px,#000 7.6px)"></div>
<div class="a" style="left:1569px;top:851px;width:244px;height:37px;border:1px dashed #ddd;border-radius:4px"></div>
<div class="t" style="left:1580px;top:861px;font-size:13px;color:#aaa">+ Add more...</div>
<div class="a" style="left:1558px;top:899px;width:266px;height:0;border-top:1px dashed #e3e3e3"></div>
<div class="a" style="left:1824px;top:128px;width:8px;height:479px;background:#e9e9e9;border-radius:4px"></div>

<!-- right icon sidebar -->
<div class="a" style="left:1832px;top:90px;width:45px;height:828px;background:#fafafa"></div>
<div class="a" style="left:1832px;top:90px;width:1px;height:828px;background:#e8e8e8"></div>
<div class="a" style="left:1877px;top:0;width:1px;height:918px;background:#efefef"></div>
<div class="a" style="left:1833px;top:92px;width:44px;height:44px;background:#eaf1f8"></div>
<div class="a" style="left:1873px;top:92px;width:4px;height:44px;background:#317bb9"></div>
<div class="a" style="left:1833px;top:179.5px;width:42px;height:1px;background:#eee"></div>
<div class="a" style="left:1833px;top:223.5px;width:42px;height:1px;background:#eee"></div>
<div class="a" style="left:1833px;top:267.5px;width:42px;height:1px;background:#eee"></div>
<svg style="left:1846px;top:108px" width="14" height="11" viewBox="0 0 14 11"><path d="M0.8 0.5 V10.2 H13.5" fill="none" stroke="#333" stroke-width="1.1"/><rect x="3" y="5.5" width="1.4" height="3.5" fill="#333"/><rect x="5.8" y="2.5" width="1.4" height="6.5" fill="#333"/><rect x="8.5" y="4.5" width="1.4" height="4.5" fill="#333"/><rect x="11.2" y="1.5" width="1.4" height="7.5" fill="#333"/></svg>
<svg style="left:1846px;top:151px" width="14" height="14" viewBox="0 0 14 14"><circle cx="6.8" cy="6.8" r="6.4" fill="#333"/><rect x="5.9" y="5.6" width="1.8" height="4.6" fill="#fff"/><rect x="5.9" y="2.8" width="1.8" height="1.8" rx="0.9" fill="#fff"/><rect x="5" y="9.3" width="3.6" height="1.1" fill="#fff"/><rect x="5" y="5.6" width="2.5" height="1" fill="#fff"/></svg>
<svg style="left:1846px;top:195px" width="14" height="14" viewBox="0 0 14 14"><rect x="5.40" y="0" width="2.8" height="3.5" fill="#333" transform="rotate(0 6.8 6.8)"/><rect x="5.40" y="0" width="2.8" height="3.5" fill="#333" transform="rotate(45 6.8 6.8)"/><rect x="5.40" y="0" width="2.8" height="3.5" fill="#333" transform="rotate(90 6.8 6.8)"/><rect x="5.40" y="0" width="2.8" height="3.5" fill="#333" transform="rotate(135 6.8 6.8)"/><rect x="5.40" y="0" width="2.8" height="3.5" fill="#333" transform="rotate(180 6.8 6.8)"/><rect x="5.40" y="0" width="2.8" height="3.5" fill="#333" transform="rotate(225 6.8 6.8)"/><rect x="5.40" y="0" width="2.8" height="3.5" fill="#333" transform="rotate(270 6.8 6.8)"/><rect x="5.40" y="0" width="2.8" height="3.5" fill="#333" transform="rotate(315 6.8 6.8)"/><circle cx="6.8" cy="6.8" r="4.9" fill="#333"/><circle cx="6.8" cy="6.8" r="2" fill="#fafafa"/></svg>
<svg style="left:1845px;top:239px" width="15" height="14" viewBox="0 0 15 14"><path d="M3.3 3.6 A5.6 5.6 0 1 1 2.4 9.3" fill="none" stroke="#333" stroke-width="1.5"/><path d="M0.6 1.6 L1 6.4 L5.6 5.6 Z" fill="#333"/><path d="M8.6 4 V7.6 L10.8 9.4" fill="none" stroke="#333" stroke-width="1.4"/></svg><div class="a" style="left:1811px;top:861px;width:38px;height:38px;border-radius:50%;background:#fff;border:1px solid #e6f2e6;box-shadow:0 1px 4px rgba(0,0,0,0.22)"></div><div class="t" style="left:1824.5px;top:868.5px;font-size:22.5px;line-height:22px;color:#333;transform:scaleX(0.85);transform-origin:0 0">?</div>
</body></html>
